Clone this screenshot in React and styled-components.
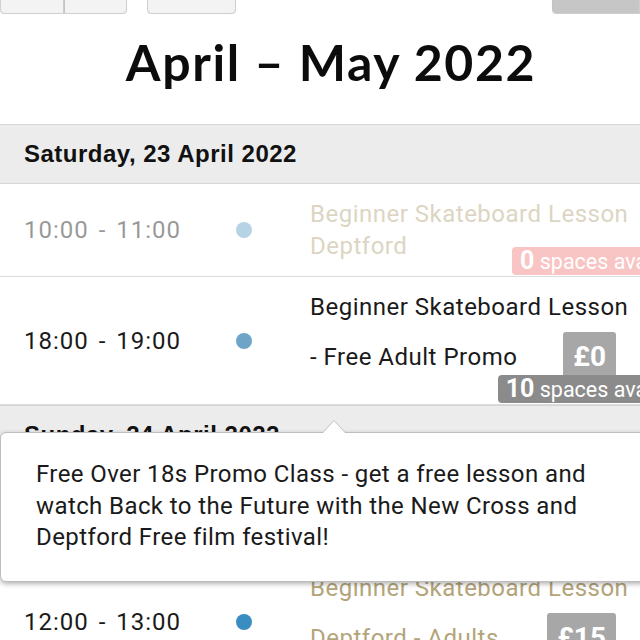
import React from "react";
import styled, { createGlobalStyle } from "styled-components";

const GlobalStyle = createGlobalStyle`
  html, body {
    margin: 0;
    padding: 0;
    overflow: hidden;
    background: #fff;
  }
  body {
    font-family: Roboto, "Liberation Sans", sans-serif;
    color: #1a1a1a;
  }
`;

const Page = styled.div`
  width: 640px;
  height: 640px;
  overflow: hidden;
  position: relative;
`;

const Toolbar = styled.div`
  display: flex;
  align-items: flex-end;
  height: 14px;
  overflow: hidden;
`;

const ButtonGroup = styled.div`
  display: flex;
  width: 127px;
  margin-right: 20px;
`;

const ToolButton = styled.button`
  flex: ${(p) => (p.$grow ? 1 : "none")};
  width: ${(p) => p.$width || "auto"};
  height: 40px;
  border: 1px solid #cfcfcf;
  background: ${(p) => (p.$dark ? "#c6c6c6" : "#f3f3f3")};
  border-radius: ${(p) => p.$radius || "0 0 5px 5px"};
  box-shadow: 0 1px 1px rgba(0, 0, 0, 0.12);
  margin-left: ${(p) => (p.$push ? "auto" : "0")};
  padding: 0;
  & + & {
    border-left: 1px solid #c4c4c4;
  }
`;

const Title = styled.h1`
  margin: 0;
  height: 110px;
  display: flex;
  align-items: center;
  justify-content: center;
  padding: 0 0 15px 22px;
  box-sizing: border-box;
  font-family: Lato, "Noto Sans", sans-serif;
  font-weight: 700;
  font-size: 50px;
  letter-spacing: 1.6px;
  color: #0c0c0c;
`;

const DayHeader = styled.div`
  height: 60px;
  box-sizing: border-box;
  display: flex;
  align-items: center;
  padding-left: 24px;
  background: #ececec;
  border-top: 1px solid #d6d6d6;
  border-bottom: 1px solid #d6d6d6;
  font-family: "Liberation Sans", Arial, sans-serif;
  font-weight: 700;
  font-size: 24px;
  letter-spacing: 0.5px;
  color: #111;
`;

const Row = styled.div`
  position: relative;
  display: flex;
  align-items: center;
  padding: 14px 0 14px 24px;
  border-bottom: 1px solid #dcdcdc;
`;

const Faded = styled.div`
  display: flex;
  align-items: center;
  flex: 1;
  opacity: ${(p) => (p.$past ? 0.45 : 1)};
`;

const Time = styled.div`
  width: 200px;
  flex: none;
  font-size: 24px;
  letter-spacing: 1px;
  word-spacing: 3px;
  color: #1a1a1a;
`;

const DotCell = styled.div`
  width: 40px;
  flex: none;
  display: flex;
  justify-content: center;
`;

const Dot = styled.span`
  width: 16px;
  height: 16px;
  border-radius: 50%;
  background: ${(p) => p.$color};
`;

const Info = styled.div`
  flex: 1;
  margin-left: 46px;
  font-size: 24px;
  letter-spacing: 0.5px;
  line-height: 32px;
  white-space: nowrap;
  color: ${(p) => (p.$muted ? "#b3a47a" : "#1a1a1a")};
`;

const PriceLine = styled.div`
  display: flex;
  align-items: center;
  justify-content: space-between;
  margin: 9px 0;
  min-height: 49px;
`;

const Price = styled.span`
  margin-right: 24px;
  height: 49px;
  line-height: 49px;
  padding: 0 10px;
  border-radius: 3px;
  background: #a7a7a7;
  color: #fff;
  font-weight: 700;
  font-size: 28px;
  letter-spacing: 0;
`;

const Spaces = styled.div`
  position: absolute;
  right: -66px;
  bottom: 1px;
  height: 28px;
  line-height: 28px;
  padding: 0 8px;
  border-radius: 4px;
  background: ${(p) => (p.$full ? "#f07d7d" : "#8b8b8b")};
  color: #fff;
  font-size: 21.5px;
  opacity: ${(p) => (p.$past ? 0.45 : 1)};
  b {
    font-size: 25px;
  }
`;

const Tooltip = styled.div`
  position: absolute;
  top: 432px;
  left: 0;
  width: 660px;
  box-sizing: border-box;
  padding: 26px 35px 27px;
  background: #fff;
  border: 1px solid #bdbdbd;
  border-radius: 6px;
  box-shadow: 0 2px 5px rgba(0, 0, 0, 0.3);
  font-size: 24px;
  letter-spacing: 0.4px;
  line-height: 31.5px;
  color: #1a1a1a;

  &::before,
  &::after {
    content: "";
    position: absolute;
    left: 321px;
    border: 12px solid transparent;
    border-top: 0;
  }
  &::before {
    top: -13px;
    border-bottom: 13px solid #bdbdbd;
  }
  &::after {
    top: -12px;
    border-bottom: 13px solid #fff;
  }
`;

const Session = ({ time, dot, lines, price, spaces, past, muted }) => (
  <Row>
    <Faded $past={past}>
      <Time>{time}</Time>
      <DotCell>
        <Dot $color={dot} />
      </DotCell>
      <Info $muted={muted}>
        <div>{lines[0]}</div>
        {price ? (
          <PriceLine>
            <span>{lines[1]}</span>
            <Price>{price}</Price>
          </PriceLine>
        ) : (
          <div>{lines[1]}</div>
        )}
      </Info>
    </Faded>
    {spaces !== undefined && (
      <Spaces $full={spaces === 0} $past={past}>
        <b>{spaces}</b> spaces available
      </Spaces>
    )}
  </Row>
);

export default function App() {
  return (
    <Page>
      <GlobalStyle />
      <Toolbar>
        <ButtonGroup>
          <ToolButton $grow $radius="0 0 0 5px" aria-label="previous" />
          <ToolButton $grow $radius="0 0 5px 0" aria-label="next" />
        </ButtonGroup>
        <ToolButton $width="89px" aria-label="today" />
        <ToolButton $width="88px" $dark $push $radius="0 0 0 5px" />
      </Toolbar>
      <Title>April – May 2022</Title>

      <DayHeader>Saturday, 23 April 2022</DayHeader>
      <Session
        past
        muted
        time="10:00 - 11:00"
        dot="#5f9fc6"
        lines={["Beginner Skateboard Lesson", "Deptford"]}
        spaces={0}
      />
      <Session
        time="18:00 - 19:00"
        dot="#6ea4c8"
        lines={["Beginner Skateboard Lesson", "- Free Adult Promo"]}
        price="£0"
        spaces={10}
      />

      <DayHeader>Sunday, 24 April 2022</DayHeader>
      <Session
        muted
        time="10:00 - 11:00"
        dot="#3a8dc0"
        lines={["Beginner Skateboard Lesson", "Deptford - Kids"]}
      />
      <Session
        muted
        time="12:00 - 13:00"
        dot="#3a8dc0"
        lines={["Beginner Skateboard Lesson", "Deptford - Adults"]}
        price="£15"
        spaces={8}
      />

      <Tooltip>
        Free Over 18s Promo Class - get a free lesson and
        <br />
        watch Back to the Future with the New Cross and
        <br />
        Deptford Free film festival!
      </Tooltip>
    </Page>
  );
}
